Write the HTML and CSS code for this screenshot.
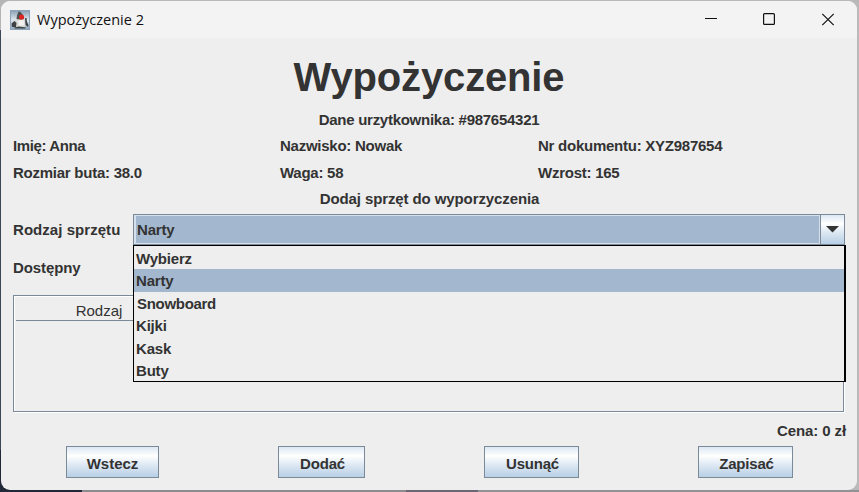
FILE: index.html
```html
<!DOCTYPE html>
<html lang="pl">
<head>
<meta charset="utf-8">
<title>Wypożyczenie 2</title>
<link rel="stylesheet" href="styles.css">
</head>
<body>
<main class="window">
  <header class="titlebar">
    <svg class="app-icon" width="20" height="20" viewBox="0 0 20 20">
      <defs><linearGradient id="sky" x1="0" y1="0" x2="0" y2="1"><stop offset="0" stop-color="#8aa0b4"/><stop offset=".5" stop-color="#dfe7ee"/><stop offset="1" stop-color="#8fa6bd"/></linearGradient></defs>
      <rect x=".5" y=".5" width="19" height="19" fill="url(#sky)" stroke="#8ea3b7"/>
      <path d="M9 2L7 8L3 12L5 17L15 17L17 12L14 8Z" fill="#d9dad8"/>
      <path d="M8.500 1.500L7 5.500L6.500 9L10 9.500L14 9L13 5L10.500 2Z" fill="#4a4f51"/>
      <path d="M1.500 13.500L4.500 11L6.500 13L6 17L2 17ZM15 8L16.500 8L17 12L18.500 15L18 17L15.500 15ZM4 17.500L9 16.500L16 17.500L15 18.500L5 18.500Z" fill="#3d4244"/>
      <path d="M8 10.500L13.500 10L14.500 15L9 16Z" fill="#f2f2ee"/>
      <circle cx="11.500" cy="7" r="2.600" fill="#df2523"/>
    </svg>
    <span class="caption">Wypożyczenie 2</span>
    <svg class="controls" width="132" height="14" viewBox="0 0 132 14" fill="none" stroke="#111" stroke-width="1.200">
      <path d="M0 5.500H12"/>
      <rect x="58.600" y=".6" width="10.800" height="10.800" rx="1"/>
      <path d="M117.300 .8L128.700 12.200M128.700 .8L117.300 12.200"/>
    </svg>
  </header>
  <section class="content">
    <h1>Wypożyczenie</h1>
    <div class="center user">Dane urzytkownika: #987654321</div>
    <div class="info">
      <span>Imię: Anna</span><span>Nazwisko: Nowak</span><span>Nr dokumentu: XYZ987654</span>
      <span>Rozmiar buta: 38.0</span><span>Waga: 58</span><span>Wzrost: 165</span>
    </div>
    <div class="center add">Dodaj sprzęt do wyporzyczenia</div>
    <div class="field">
      <label>Rodzaj sprzętu</label>
      <div class="combo">
        <div class="value">Narty</div>
        <div class="arrow"><svg width="13" height="7" viewBox="0 0 13 7"><path d="M0 0H13L6.500 6.500Z" fill="#333"/></svg></div>
        <ul class="popup">
          <li>Wybierz</li><li class="selected">Narty</li><li class="indent">Snowboard</li><li>Kijki</li><li>Kask</li><li>Buty</li>
        </ul>
      </div>
    </div>
    <div class="available">Dostępny</div>
    <div class="table"><div class="thead"><span>Rodzaj</span></div></div>
    <div class="price">Cena: 0 zł</div>
    <div class="buttons">
      <button class="back">Wstecz</button><button class="insert">Dodać</button><button class="remove">Usunąć</button><button class="save">Zapisać</button>
    </div>
  </section>
</main>
</body>
</html>
```
FILE: styles.css
```css
* { box-sizing: border-box; }
body {
  margin: 0;
  width: 859px;
  height: 492px;
  padding: 1px 2px 2px 1px;
  overflow: hidden;
  background:
    linear-gradient(to right, #202938 0 82px, #8c8c8e 82px 406px, #6b6575 406px 478px, #929294 478px) 0 100% / 100% 2px no-repeat,
    linear-gradient(#b5b5b5 0 30px, #3b4657 30px 450px, #202938 450px) 0 0 / 20px 100% no-repeat,
    #b9b9b9;
  font: bold 15px/20px "Liberation Sans", Arial, sans-serif;
  color: #333;
}
.window {
  width: 856px;
  height: 489px;
  border-radius: 9px;
  background: #eee;
  overflow: hidden;
}
.titlebar {
  height: 37px;
  display: flex;
  align-items: center;
  padding: 0 20px 0 9px;
  background: #f3f3f3;
}
.caption {
  margin-left: 7px;
  font: 14.5px/20px "Open Sans", "Noto Sans", sans-serif;
  color: #111;
}
.controls { margin-left: auto; }
.content { padding: 0 12px; }
h1 {
  margin: 0;
  padding-top: 15px;
  height: 72px;
  text-align: center;
  font-size: 40px;
  line-height: 48px;
  letter-spacing: -.15px;
}
.center { text-align: center; height: 20px; }
.user { letter-spacing: -.27px; }
.add { letter-spacing: -.1px; padding-left: 1px; }
.info {
  margin-top: 6px;
  display: grid;
  grid-template-columns: 267px 258px 1fr;
  grid-template-rows: 27px 26px;
  letter-spacing: -.25px;
}
.info span:first-child { letter-spacing: -.4px; }
.field { display: flex; height: 31px; margin-top: 5px; }
.field label { width: 120px; line-height: 32px; letter-spacing: .05px; }
.combo {
  position: relative;
  display: flex;
  width: 712px;
  border: 1px solid #7a8a99;
}
.value {
  flex: 1;
  border: 2px solid #d5e0ec;
  border-width: 1px 1px 1px 2px;
  background: #a3b8cf;
  padding-left: 1px;
  line-height: 28px;
  letter-spacing: -.2px;
}
.arrow {
  width: 24px;
  border-left: 1px solid #7a8a99;
  display: flex;
  align-items: center;
  justify-content: center;
  background: linear-gradient(#dde8f3, #fff 30%, #dde8f3 60%, #b8cfe5);
}
.popup {
  position: absolute;
  z-index: 1;
  left: -1px;
  top: 30px;
  width: 713px;
  height: 137px;
  margin: 0;
  padding: 1px 0 0;
  list-style: none;
  border: 1px solid #000;
  border-right-width: 2px;
  background: #eee;
  letter-spacing: -.2px;
}
.popup li { height: 22.400px; padding-left: 2px; line-height: 23px; }
.popup .selected { background: #a3b8cf; }
.popup .indent { padding-left: 3px; letter-spacing: -.3px; }
.available { margin-top: 13px; height: 20px; letter-spacing: -.1px; }
.table {
  width: 831px;
  height: 117px;
  margin-top: 17px;
  padding: 1px;
  border: 1px solid #7a8a99;
  box-shadow: 1px 1px #fff, inset 1px 1px #fff;
}
.thead {
  height: 24px;
  margin-left: 1px;
  border-bottom: 1px solid #7a8a99;
  font-weight: normal;
  line-height: 27px;
}
.thead span { display: block; width: 166px; text-align: center; }
.price { margin: 9px -1px 0 0; height: 20px; text-align: right; letter-spacing: -.1px; }
.buttons { display: flex; margin-top: 5px; padding-left: 53px; }
button {
  height: 32px;
  padding: 3px 0 0;
  border: 1px solid #7a8a99;
  font: inherit;
  color: inherit;
  letter-spacing: -.2px;
  background: linear-gradient(#dde8f3, #fff 30%, #dde8f3 60%, #b8cfe5);
}
.back { width: 93px; margin-right: 119px; letter-spacing: 0; }
.insert { width: 87px; margin-right: 119px; padding-left: 2px; }
.remove { width: 95px; margin-right: 119px; padding-left: 2px; }
.save { width: 95px; padding-left: 2px; }
```
